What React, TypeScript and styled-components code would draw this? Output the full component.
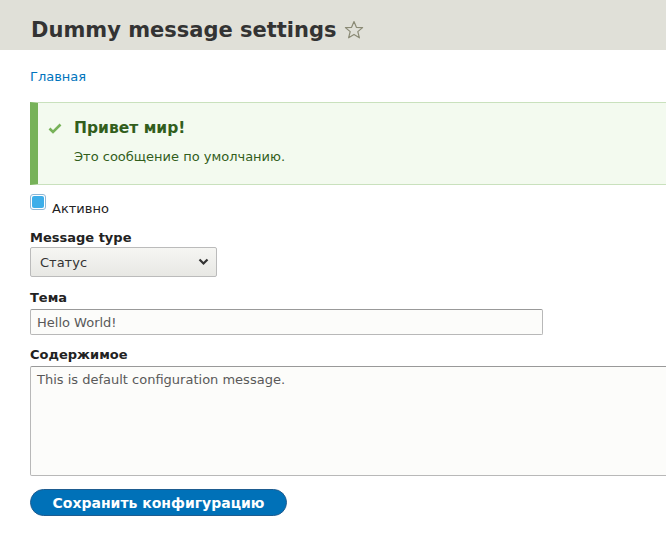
import React from "react";
import styled, { createGlobalStyle } from "styled-components";

const Global = createGlobalStyle`
  html, body { margin: 0; padding: 0; background: #fff; overflow: hidden; }
  body { font-family: "DejaVu Sans", Verdana, sans-serif; color: #222330; }
  * { box-sizing: border-box; }
`;

const Page = styled.div`
  width: 760px;
  display: flex;
  flex-direction: column;
`;

const Header = styled.header`
  background: #e0e0d8;
  height: 50px;
  display: flex;
  align-items: flex-start;
  padding: 18px 0 0 31px;
`;

const Title = styled.h1`
  margin: 0;
  font-size: 21px;
  font-weight: bold;
  color: #333;
  line-height: 24px;
  display: flex;
  align-items: center;
  gap: 7px;
`;

const Main = styled.main`
  display: flex;
  flex-direction: column;
  padding: 0 0 0 30px;
`;

const Breadcrumb = styled.a`
  margin-top: 18px;
  font-size: 13px;
  line-height: 17px;
  color: #0074bd;
  text-decoration: none;
  align-self: flex-start;
`;

const Message = styled.div`
  margin-top: 17px;
  height: 83px;
  background: #f3faef;
  border: 1px solid #c9e1bd;
  border-left: 8px solid #77b259;
  display: grid;
  grid-template-columns: 36px 1fr;
  grid-template-rows: auto auto;
  align-content: start;
  padding: 15px 0 0 0;
  color: #325e1c;
`;

const CheckIcon = styled.svg`
  margin: 5px 0 0 10px;
`;

const MsgTitle = styled.div`
  font-size: 15.5px;
  font-weight: bold;
  line-height: 20px;
`;

const MsgBody = styled.div`
  grid-column: 2;
  margin-top: 11px;
  font-size: 13px;
  line-height: 16px;
  color: #325e1c;
`;

const CheckRow = styled.label`
  margin-top: 15px;
  display: flex;
  align-items: flex-start;
  gap: 6px;
  font-size: 13px;
  line-height: 17px;
  color: #222;
  height: 17px;
`;

const Box = styled.span`
  width: 16px;
  height: 16px;
  border-radius: 3px;
  border: 1px solid #8fb8d6;
  background: #fff;
  padding: 1px;
  display: flex;
  margin-top: -6px;
`;

const BoxFill = styled.span`
  flex: 1;
  border-radius: 2px;
  background: #3daee9;
`;

const Label = styled.div<{ $top: number }>`
  margin-top: ${(p) => p.$top}px;
  font-size: 13px;
  font-weight: bold;
  line-height: 17px;
  color: #222;
`;

const Select = styled.div`
  margin-top: 1px;
  width: 187px;
  height: 30px;
  border: 1px solid #bbb;
  border-radius: 2px;
  background: linear-gradient(#f6f6f3, #e8e8e4);
  display: flex;
  align-items: center;
  justify-content: space-between;
  padding: 0 7px 0 9px;
  font-size: 13px;
  color: #333;
`;

const Input = styled.div`
  margin-top: 3px;
  width: 513px;
  height: 26px;
  border: 1px solid #b8b8b8;
  border-top-color: #999;
  border-radius: 2px;
  background: #fcfcfa;
  display: flex;
  align-items: center;
  padding: 0 6px;
  font-size: 13px;
  color: #595959;
`;

const TextArea = styled.div`
  margin-top: 3px;
  width: 700px;
  height: 110px;
  border: 1px solid #b8b8b8;
  border-top-color: #999;
  border-radius: 2px;
  background: #fcfcfa;
  padding: 4px 6px;
  font-size: 13px;
  line-height: 18px;
  color: #595959;
`;

const Button = styled.button`
  margin-top: 13px;
  align-self: flex-start;
  width: 257px;
  height: 27px;
  border: 1px solid #1e5c90;
  border-radius: 20px;
  background: #0071b8;
  color: #fff;
  font-family: "DejaVu Sans", Verdana, sans-serif;
  font-size: 14px;
  font-weight: bold;
  padding: 0;
`;

export default function App() {
  return (
    <>
      <Global />
      <Page>
        <Header>
          <Title>
            Dummy message settings
            <svg width="20" height="20" viewBox="0 0 20 20">
              <path
                d="M10 1.5 L12.4 7.3 L18.6 7.6 L13.8 11.6 L15.4 17.8 L10 14.4 L4.6 17.8 L6.2 11.6 L1.4 7.6 L7.6 7.3 Z"
                fill="none"
                stroke="#8a8a75"
                strokeWidth="1.2"
                strokeLinejoin="round"
              />
            </svg>
          </Title>
        </Header>
        <Main>
          <Breadcrumb href="#">Главная</Breadcrumb>
          <Message>
            <CheckIcon width="14" height="11" viewBox="0 0 14 11">
              <path d="M1.5 5.5 L5 9 L12.5 1.5" fill="none" stroke="#77b259" strokeWidth="2.6" />
            </CheckIcon>
            <MsgTitle>Привет мир!</MsgTitle>
            <MsgBody>Это сообщение по умолчанию.</MsgBody>
          </Message>
          <CheckRow>
            <Box>
              <BoxFill />
            </Box>
            Активно
          </CheckRow>
          <Label $top={12}>Message type</Label>
          <Select>
            Статус
            <svg width="11" height="8" viewBox="0 0 11 8">
              <path d="M1.5 1.5 L5.5 5.5 L9.5 1.5" fill="none" stroke="#333" strokeWidth="2.2" />
            </svg>
          </Select>
          <Label $top={12}>Тема</Label>
          <Input>Hello World!</Input>
          <Label $top={11}>Содержимое</Label>
          <TextArea>This is default configuration message.</TextArea>
          <Button>Сохранить конфигурацию</Button>
        </Main>
      </Page>
    </>
  );
}
